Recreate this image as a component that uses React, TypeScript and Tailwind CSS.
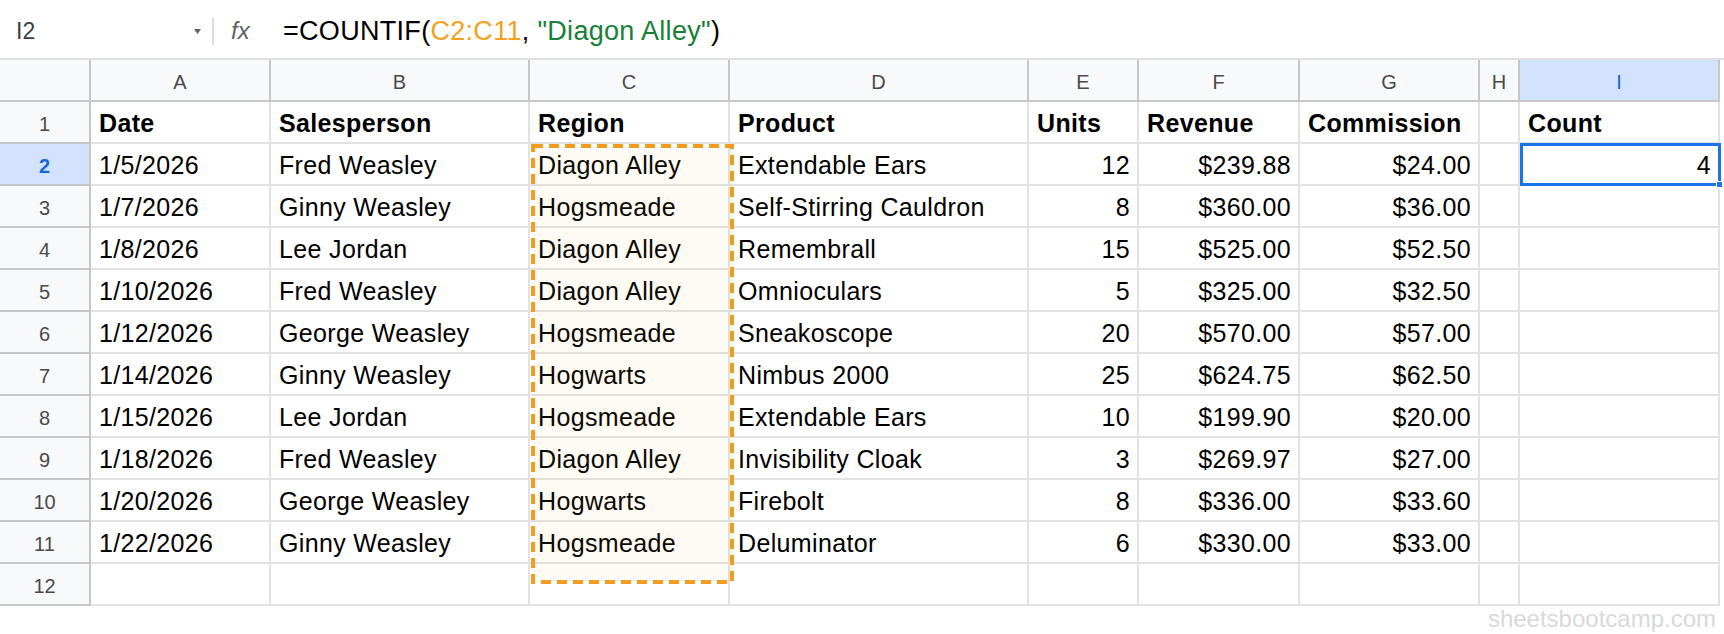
import React from "react";

const letters = ["A", "B", "C", "D", "E", "F", "G", "H", "I"];

const header = ["Date", "Salesperson", "Region", "Product", "Units", "Revenue", "Commission", "", "Count"];

const rows: string[][] = [
  ["1/5/2026", "Fred Weasley", "Diagon Alley", "Extendable Ears", "12", "$239.88", "$24.00", "", "4"],
  ["1/7/2026", "Ginny Weasley", "Hogsmeade", "Self-Stirring Cauldron", "8", "$360.00", "$36.00", "", ""],
  ["1/8/2026", "Lee Jordan", "Diagon Alley", "Remembrall", "15", "$525.00", "$52.50", "", ""],
  ["1/10/2026", "Fred Weasley", "Diagon Alley", "Omnioculars", "5", "$325.00", "$32.50", "", ""],
  ["1/12/2026", "George Weasley", "Hogsmeade", "Sneakoscope", "20", "$570.00", "$57.00", "", ""],
  ["1/14/2026", "Ginny Weasley", "Hogwarts", "Nimbus 2000", "25", "$624.75", "$62.50", "", ""],
  ["1/15/2026", "Lee Jordan", "Hogsmeade", "Extendable Ears", "10", "$199.90", "$20.00", "", ""],
  ["1/18/2026", "Fred Weasley", "Diagon Alley", "Invisibility Cloak", "3", "$269.97", "$27.00", "", ""],
  ["1/20/2026", "George Weasley", "Hogwarts", "Firebolt", "8", "$336.00", "$33.60", "", ""],
  ["1/22/2026", "Ginny Weasley", "Hogsmeade", "Deluminator", "6", "$330.00", "$33.00", "", ""],
  ["", "", "", "", "", "", "", "", ""],
];

// columns whose values sit on the right (numbers)
const rightCols = [4, 5, 6, 8];

const gridCols =
  "grid grid-cols-[91px_180px_259px_200px_299px_110px_161px_180px_40px_200px]";

function RowHead({ n, active }: { n: number; active?: boolean }) {
  return (
    <div
      className={
        "flex h-[42px] items-center justify-center border-r-2 border-b-2 border-[#c7c7c7] pt-[3px] text-[20px] " +
        (active ? "bg-[#d3e3fd] font-bold text-[#1b66d6]" : "bg-[#f8f9fa] text-[#4a4a4a]")
      }
    >
      {n}
    </div>
  );
}

export default function App() {
  return (
    <div
      className="relative h-[634px] w-[1724px] overflow-hidden bg-white text-black"
      style={{ fontFamily: '"Liberation Sans", Arial, sans-serif' }}
    >
      {/* formula bar */}
      <div className="flex h-[60px] items-center border-b-2 border-[#e0e0e0] pt-[4px]">
        <div className="flex w-[212px] items-center justify-between pl-[16px] pr-[11px]">
          <span className="text-[23px] text-[#3c4043]">I2</span>
          <svg width="7" height="5" viewBox="0 0 7 5">
            <path d="M0 0 L7 0 L3.5 5 Z" fill="#5f6368" />
          </svg>
        </div>
        <div className="h-[27px] w-[2px] bg-[#dadce0]" />
        <span className="ml-[17px] w-[52px] text-[24px] italic text-[#5f6368]">fx</span>
        <span className="text-[27px] tracking-[0.3px]">
          =COUNTIF(<span className="text-[#f5a020]">C2:C11</span>,{" "}
          <span className="text-[#188038]">"Diagon Alley"</span>)
        </span>
      </div>

      {/* sheet */}
      <div className="relative">
        {/* column letters */}
        <div className={gridCols}>
          <div className="h-[42px] border-r-2 border-b-2 border-[#c7c7c7] bg-[#f8f9fa]" />
          {letters.map((l) => (
            <div
              key={l}
              className={
                "flex h-[42px] items-center justify-center border-r-2 border-b-2 border-[#c7c7c7] pt-[3px] text-[20px] " +
                (l === "I" ? "bg-[#d3e3fd] text-[#1b66d6]" : "bg-[#f8f9fa] text-[#4a4a4a]")
              }
            >
              {l}
            </div>
          ))}
        </div>

        {/* header row */}
        <div className={gridCols}>
          <RowHead n={1} />
          {header.map((h, i) => (
            <div
              key={i}
              className="flex h-[42px] items-end border-r-2 border-b-2 border-[#e2e2e2] px-[8px] pb-0 text-[25px] font-bold tracking-[0.35px] whitespace-nowrap"
            >
              {h}
            </div>
          ))}
        </div>

        {rows.map((r, ri) => (
          <div key={ri} className={gridCols}>
            <RowHead n={ri + 2} active={ri === 0} />
            {r.map((v, ci) => (
              <div
                key={ci}
                className={
                  "flex h-[42px] items-end border-r-2 border-b-2 border-[#e2e2e2] pb-0 text-[25px] tracking-[0.35px] whitespace-nowrap " +
                  (rightCols.includes(ci) ? "justify-end pr-[7px]" : "pl-[8px]")
                }
              >
                {v}
              </div>
            ))}
          </div>
        ))}

        {/* copied range C2:C11 */}
        <div className="pointer-events-none absolute left-[533px] top-[86px] h-[436px] w-[199px] bg-[#f39c1f]/5" />
        <svg
          className="pointer-events-none absolute left-[531px] top-[84px]"
          width="203"
          height="440"
          viewBox="0 0 203 440"
        >
          <rect
            x="2"
            y="2"
            width="199"
            height="436"
            fill="none"
            stroke="#f39c1f"
            strokeWidth="4"
            strokeDasharray="10 6"
          />
        </svg>

        {/* selected cell I2 */}
        <div className="pointer-events-none absolute left-[1520px] top-[83px] h-[43px] w-[201px] border-[3px] border-[#1a73e8]">
          <div className="absolute -bottom-[5px] -right-[5px] h-[7px] w-[7px] border border-white bg-[#1a73e8]" />
        </div>
      </div>

      <div className="flex justify-end pr-[8px] text-[24px] leading-[26px] text-[#d9d9d9]">
        sheetsbootcamp.com
      </div>
    </div>
  );
}
